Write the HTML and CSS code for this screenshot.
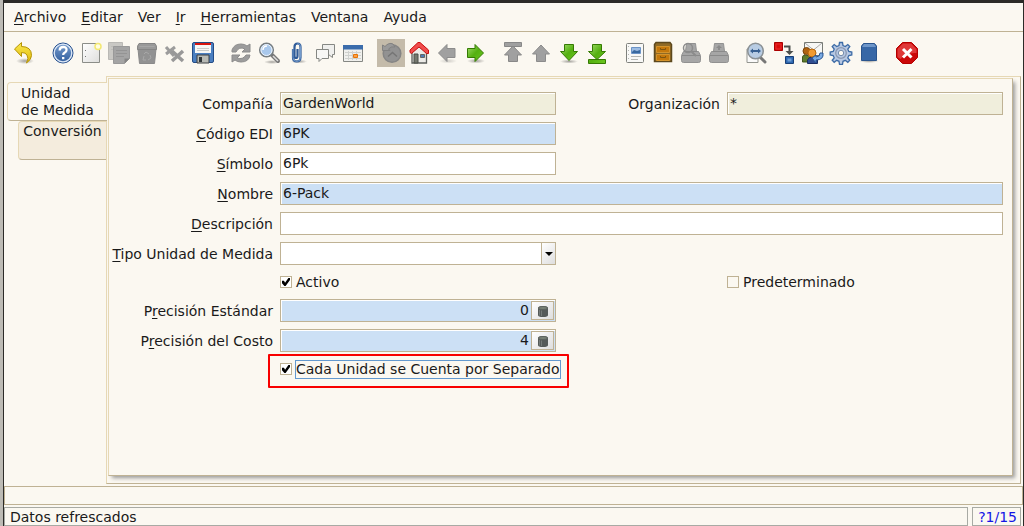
FILE: index.html
```html
<!DOCTYPE html>
<html lang="es">
<head>
<meta charset="utf-8">
<meta name="viewport" content="width=device-width, initial-scale=1">
<title>Unidad de Medida</title>
<link rel="stylesheet" href="styles.css">
</head>
<body>
<svg class="defs" width="0" height="0" aria-hidden="true">
  <defs>
    <linearGradient id="green" x1="0" y1="0" x2="1" y2="1"><stop offset="0" stop-color="#a5e070"/><stop offset=".5" stop-color="#54b010"/><stop offset="1" stop-color="#6cc820"/></linearGradient>
    <linearGradient id="blue" x1="0" y1="0" x2="0" y2="1"><stop offset="0" stop-color="#7ba0d0"/><stop offset="1" stop-color="#2f5c9c"/></linearGradient>
    <linearGradient id="gold" x1="0" y1="0" x2="0" y2="1"><stop offset="0" stop-color="#fbe94e"/><stop offset="1" stop-color="#dfb808"/></linearGradient>
    <linearGradient id="paper" x1="0" y1="0" x2="1" y2="1"><stop offset="0" stop-color="#ffffff"/><stop offset="1" stop-color="#dededc"/></linearGradient>
    <radialGradient id="shade"><stop offset="0" stop-color="#000" stop-opacity=".35"/><stop offset="1" stop-color="#000" stop-opacity="0"/></radialGradient>
    <g id="printer"><path d="M7.500 2.500h9l1 8h2l2 4v5q0 2-2 2h-15q-2 0-2-2v-5l2-4h2z" fill="#a6a6a6" stroke="#919191"/><path d="M3 14.500h18M6 10.500h12" stroke="#8a8a8a"/></g>
    <g id="calc"><path d="M1 3q0-2 5-2t5 2v7q0 2-5 2t-5-2z" fill="#555a59"/><ellipse cx="6" cy="3" rx="4.500" ry="1.500" fill="#7a8378" stroke="#5c635e"/><path d="M2.500 5v5.500M4.500 5.500V11" stroke="#747a79"/></g>
  </defs>
</svg>

<main class="window">
  <nav class="menubar" aria-label="Menú principal">
    <button><u>A</u>rchivo</button>
    <button><u>E</u>ditar</button>
    <button>Ver</button>
    <button><u>I</u>r</button>
    <button><u>H</u>erramientas</button>
    <button>Ventana</button>
    <button>Ayuda</button>
  </nav>

  <div class="toolbar" role="toolbar" aria-label="Herramientas">
    <div class="group">
      <button aria-label="Deshacer"><svg viewBox="0 0 24 24"><ellipse cx="12" cy="20" rx="9" ry="3" fill="url(#shade)"/><path d="M1.500 8 8.500 1.500V5.500q10 0 10 9 0 4-5 7.500 2.500-5 .500-8-1.500-2.500-5.500-2.500v4z" fill="url(#gold)" stroke="#b59406"/></svg></button>
    </div>
    <div class="group">
      <button aria-label="Ayuda"><svg viewBox="0 0 24 24"><circle cx="12" cy="12" r="10" fill="url(#blue)" stroke="#234d8c"/><circle cx="12" cy="12" r="8.800" fill="none" stroke="#dce7f5" stroke-width="1.300"/><path d="M8.700 9.500q0-3.500 3.500-3.500t3.300 3q0 1.700-2 2.800-1.300.7-1.300 2.200M12.200 16v2.300" fill="none" stroke="#fff" stroke-width="2.300"/></svg></button>
      <button aria-label="Nuevo"><svg viewBox="0 0 24 24"><path d="M3.500 2.500h17v19h-17z" fill="url(#paper)" stroke="#8b8d88"/><path d="M6 9.500h1M6 15.500h1" stroke="#777"/><circle cx="19" cy="5.500" r="3" fill="#fffde0" stroke="#f3e873" stroke-width="1.500"/></svg></button>
      <button aria-label="Copiar"><svg viewBox="0 0 24 24"><path d="M1.500 1.500h14v17h-14z" fill="#c9c8c4" stroke="#bab9b5"/><path d="M4 5.500h9M4 8.500h9" stroke="#bdbcb8"/><path d="M6.500 5.500h16v12l-5 5h-11z" fill="#a4a4a4" stroke="#999"/><path d="M9 9.500h11M9 12.500h11M9 15.500h8" stroke="#949494"/><path d="M17.500 22.500v-5h5z" fill="#858585"/></svg></button>
      <button aria-label="Eliminar"><svg viewBox="0 0 24 24"><path d="M3 8h18l-1.500 14.500h-15z" fill="#929292" stroke="#8a8a8a"/><path d="M4 2.500h16q2 2 1.500 6h-19q-.5-4 1.500-6z" fill="#999" stroke="#858585"/><path d="M4.500 5.500h15" stroke="#a6a6a6"/><path d="m9 13 2-2 3 2M15 14l1 3-3 2M11 19H8l1-4" fill="none" stroke="#a8a8a8"/></svg></button>
      <button aria-label="Borrar selección"><svg viewBox="0 0 24 24"><path d="m3 6 8 9M12 6l-9 7" stroke="#9c9c9c" stroke-width="3"/><path d="m9 10 11 10M20 10 9 20" stroke="#989898" stroke-width="3.500"/></svg></button>
      <button aria-label="Guardar"><svg viewBox="0 0 24 24"><rect x="1.500" y="1.500" width="21" height="20" rx="1.500" fill="#4b7fc0" stroke="#244c86"/><path d="M4 2h16v10H4z" fill="#f7f7f5"/><path d="M4 3h16" stroke="#d8150f" stroke-width="2"/><path d="M6 7.500h12M6 9.500h12" stroke="#c9cbc9"/><path d="M6 14h12v8H6z" fill="#b8bab5" stroke="#3c4145"/><path d="M8 16h3v5H8z" fill="#303638"/></svg></button>
    </div>
    <div class="group">
      <button aria-label="Refrescar"><svg viewBox="0 0 24 24"><path d="M3 11V9q2-6 9-6 4 0 6 2l3-2v8h-8l3-3q-6-3-9 3zM21 14q-1 7-9 7-4 0-6-2l-3 2v-7h8l-3 3q6 2 9-3z" fill="#9c9c9c" stroke="#8c8c8c"/></svg></button>
      <button aria-label="Encontrar"><svg viewBox="0 0 24 24"><ellipse cx="15" cy="21" rx="8" ry="2" fill="url(#shade)"/><path d="m15 14 6 6" stroke="#777" stroke-width="4" stroke-linecap="round"/><path d="m16 15 5 5" stroke="#ddd" stroke-width="1.500"/><circle cx="9.500" cy="9" r="6.800" fill="#a9c8ec" stroke="#777d80" stroke-width="1.500"/><circle cx="9.500" cy="9" r="5.500" fill="none" stroke="#eef4fb"/><path d="M6 9q0-4 4-4" stroke="#fff" fill="none" stroke-width="1.500"/></svg></button>
      <button aria-label="Anexos"><svg viewBox="0 0 24 24"><ellipse cx="14" cy="20.500" rx="8" ry="2" fill="url(#shade)"/><path d="M8 8v8.500q0 4 3.700 4t3.800-4V6q0-3.500-3-3.500t-3 3.500v9q0 2 1.500 2t1.500-2V8" fill="none" stroke="#2f5b98" stroke-width="2.200"/><path d="M8 8v8.500q0 4 3.700 4t3.800-4V6q0-3.500-3-3.500" fill="none" stroke="#84abd9" stroke-width=".8"/></svg></button>
      <button aria-label="Conversación"><svg viewBox="0 0 24 24"><path d="M9.500 3.500h12v10h-2v3l-4-3h-6z" fill="#efefed" stroke="#858783"/><path d="M3.500 8.500h12v9H9l-3 3v-3H3.500z" fill="#f7f7f5" stroke="#858783"/></svg></button>
      <button aria-label="Calendario"><svg viewBox="0 0 24 24"><path d="M2.500 5.500h19v15h-19z" fill="#f0f0ed" stroke="#858783"/><path d="M2 4h20v4.500H2z" fill="#3b6cab"/><path d="M4 11.500h16M4 14.500h16M4 17.500h16M7.500 10v9M11.500 10v9M15.500 10v9" stroke="#cfd1ce"/><path d="M12.500 13.500h4v3h-4z" fill="#f9a04a" stroke="#e87404"/></svg></button>
    </div>
    <div class="group">
      <button class="pressed" aria-label="Historial" aria-pressed="true"><svg viewBox="0 0 24 24"><circle cx="13" cy="12.500" r="8.800" fill="#929292" stroke="#858585" stroke-width="1.500"/><path d="m9 15.500 4.500-4 4.500 4" fill="none" stroke="#757575" stroke-width="1.500"/><path d="M3.500 9.500V4l2.500 1.500q4-4.500 8-2.500l2 3q-4-1-6.500 2l1.500 1.500z" fill="#999" stroke="#818181"/></svg></button>
      <button aria-label="Inicio"><svg viewBox="0 0 24 24"><path d="M5 11v11h14.500V11L12 4z" fill="#ecebe7" stroke="#5c5f5c" stroke-width="1.300"/><path d="M7 13h4v9H7z" fill="#75786f" stroke="#4b4e49"/><path d="M13.500 13.500h4v3h-4z" fill="#4e7cb4" stroke="#666"/><path d="M3 11.500V9l8-7.500h2L21.500 9v3.500h-2L12 6l-7.500 6.500z" fill="#f14c4c" stroke="#c80f0f"/></svg></button>
      <button aria-label="Atrás"><svg viewBox="0 0 24 24"><ellipse cx="13" cy="20" rx="9" ry="2.500" fill="url(#shade)" opacity=".5"/><path d="M3.500 12 12 3.500v4h8v9h-8v4z" fill="#a0a0a0" stroke="#8c8c8c"/></svg></button>
      <button aria-label="Adelante"><svg viewBox="0 0 24 24"><ellipse cx="13" cy="20" rx="9" ry="2.500" fill="url(#shade)"/><path d="M20.500 12 12 3.500v4H4.500v9H12v4z" fill="url(#green)" stroke="#357a03"/></svg></button>
    </div>
    <div class="group">
      <button aria-label="Primer registro"><svg viewBox="0 0 24 24"><path d="M3.500 1.500h17v4h-17zM12 5l8.500 9h-4v6.500h-9V14h-4z" fill="#a0a0a0" stroke="#888"/></svg></button>
      <button aria-label="Registro anterior"><svg viewBox="0 0 24 24"><path d="m12 4 8.500 9h-4v7.500h-9V13h-4z" fill="#a0a0a0" stroke="#8c8c8c"/></svg></button>
      <button aria-label="Registro siguiente"><svg viewBox="0 0 24 24"><ellipse cx="12" cy="20.500" rx="9" ry="2" fill="url(#shade)"/><path d="m12 19.500 8.500-9h-4v-7h-9v7h-4z" fill="url(#green)" stroke="#357a03"/></svg></button>
      <button aria-label="Último registro"><svg viewBox="0 0 24 24"><path d="m12 18.500 8.500-8h-4v-7h-9v7h-4zM3.500 18.500h17v4h-17z" fill="url(#green)" stroke="#357a03"/></svg></button>
    </div>
    <div class="group">
      <button aria-label="Informe"><svg viewBox="0 0 24 24"><rect x="3.500" y="2.500" width="17" height="19" rx="1" fill="#f8f8f6" stroke="#7f817c"/><path d="M8.500 6.500h9v6h-9z" fill="#9dbce2" stroke="#6b93c6"/><path d="m9 11 2-2 3 1 3-1v3H9z" fill="#39699f"/><path d="M8 15.500h10M8 18.500h7M5 5.500h1M5 9.500h1M5 13.500h1M5 17.500h1" stroke="#b4b6b2"/></svg></button>
      <button aria-label="Archivo"><svg viewBox="0 0 24 24"><path d="M3.500 3.500 5 1.500h14l1.500 2v17h-17z" fill="#8f6a26" stroke="#5c481e" stroke-width="1.500"/><path d="M5.500 5.500h13v6h-13zM5.500 13.500h13v6h-13z" fill="#c4780c" stroke="#d3932c"/><path d="M9.500 7v1.500h5V7M9.500 15v1.500h5V15" fill="none" stroke="#7e5510"/></svg></button>
      <button aria-label="Vista previa"><svg viewBox="0 0 24 24"><use href="#printer"/><circle cx="9" cy="7" r="4.500" fill="none" stroke="#8c8c8c" stroke-width="1.500"/><path d="m12 10 5 5" stroke="#8c8c8c" stroke-width="2"/></svg></button>
      <button aria-label="Imprimir"><svg viewBox="0 0 24 24"><use href="#printer"/><path d="m12 4 3 3h-2v2h-2V7H9z" fill="#8a8a8a"/></svg></button>
    </div>
    <div class="group">
      <button aria-label="Visualiza"><svg viewBox="0 0 24 24"><path d="M2 8h11v13.500H2z" fill="#fafafa" stroke="#93958f"/><path d="m15 16 5 5" stroke="#777" stroke-width="3" stroke-linecap="round"/><circle cx="10.500" cy="10" r="7.800" fill="#b8cce3" stroke="#8b9195" stroke-width="1.500"/><path d="m5 10 3-2.500v1.500h5V7.500l3 2.500-3 2.500V11H8v1.500z" fill="#386091"/></svg></button>
      <button aria-label="Flujos de trabajo"><svg viewBox="0 0 24 24"><path d="M1.500 1.500h8v8h-8z" fill="#d90b0b" stroke="#aa0000"/><path d="M3 3h5v5H3z" fill="none" stroke="#e82c2c"/><path d="M11 5.500h5.500V12" fill="none" stroke="#4c4f4c" stroke-width="2"/><path d="M12.500 10h8l-4 4z" fill="#4c4f4c"/><path d="M12.500 15.500h8v7h-8z" fill="#2e68b1" stroke="#183e75"/><path d="M14.500 17.500h4v3h-4z" fill="#709fd4"/></svg></button>
      <button aria-label="Solicitudes"><svg viewBox="0 0 24 24"><path d="M3.500 1.500h18v13h-18z" fill="#f7f7f5" stroke="#777a75"/><path d="m4 2 8.500 7L21 2" fill="none" stroke="#aaa"/><path d="M1.500 21v-5q0-2 3-2t4 2v5z" fill="#5f7c2c" stroke="#40561d"/><circle cx="5.500" cy="10" r="3.500" fill="#af6311" stroke="#7a430a"/><path d="M6.500 22.500V19q1-3 5-3t5 3v3.500z" fill="#314d91" stroke="#1b2e62"/><circle cx="11" cy="12" r="4" fill="#f19a31" stroke="#b76508"/><path d="m11 17 4-3v2q4 0 4-4h3q1 7-7 7v3z" fill="#7aaae2" stroke="#285594"/></svg></button>
      <button aria-label="Proceso"><svg viewBox="0 0 24 24"><path d="m10.500 1.500h3l.5 3 2.300 1 2.500-2 2 2-2 2.500 1 2.500 3 .5v3l-3 .5-1 2.300 2 2.500-2 2-2.500-2-2.300 1-.5 3h-3l-.5-3-2.300-1-2.500 2-2-2 2-2.500-1-2.300-3-.5v-3l3-.5 1-2.500-2-2.500 2-2 2.500 2 2.300-1z" fill="#b7c8e3" stroke="#3d6ba6" stroke-width="1.300"/><circle cx="12" cy="12" r="5.300" fill="none" stroke="#8997b1" stroke-width="1.300"/><circle cx="12" cy="12" r="2.700" fill="#fbf8f1" stroke="#758cac"/></svg></button>
      <button aria-label="Producto"><svg viewBox="0 0 24 24"><ellipse cx="12" cy="20" rx="10" ry="2" fill="url(#shade)"/><path d="M4.500 19.500V5l2-2.500h11l2 2.500v14.500z" fill="#3767a6" stroke="#2a548d"/><path d="m5 6 2-3h10l2 3z" fill="#6e96c9"/></svg></button>
    </div>
    <div class="group">
      <button aria-label="Salir"><svg viewBox="0 0 24 24"><path d="M7.500 1.500h9l6 6v9l-6 6h-9l-6-6v-9z" fill="#cb0808" stroke="#b40000"/><path d="M8 2.500h8l5.500 5.500v4q-9-1-16 6l-3-2V8z" fill="#df3939"/><path d="m8 8 8.500 8.500M16.500 8 8 16.500" stroke="#fff" stroke-width="3"/></svg></button>
    </div>
  </div>

  <div class="workspace">
    <div class="tabs" role="tablist" aria-orientation="vertical">
      <button class="tab active" role="tab" aria-selected="true"><span>Unidad<br>de Medida</span></button>
      <button class="tab nested" role="tab" aria-selected="false">Conversión</button>
    </div>
    <section class="frame" role="tabpanel">
      <form class="form">
        <label for="company">Compañía</label>
        <input class="field readonly" id="company" value="GardenWorld" readonly>
        <label for="org">Organización</label>
        <input class="field readonly" id="org" value="*" readonly>

        <label class="first" for="edi"><u>C</u>ódigo EDI</label>
        <input class="field required" id="edi" value="6PK">

        <label class="first" for="symbol"><u>S</u>ímbolo</label>
        <input class="field" id="symbol" value="6Pk">

        <label class="first" for="name"><u>N</u>ombre</label>
        <input class="field required wide" id="name" value="6-Pack">

        <label class="first" for="description"><u>D</u>escripción</label>
        <input class="field wide" id="description">

        <label class="first" for="type"><u>T</u>ipo Unidad de Medida</label>
        <div class="combo">
          <select class="field" id="type"><option></option></select>
          <span class="arrow"></span>
        </div>

        <div class="check start"><input type="checkbox" id="active" checked><label for="active">Activo</label></div>
        <div class="check end"><input type="checkbox" id="default"><label for="default">Predeterminado</label></div>

        <label class="first" for="std">P<u>r</u>ecisión Estándar</label>
        <div class="field required number">
          <input id="std" value="0">
          <button type="button" aria-label="Calculadora"><svg viewBox="0 0 12 12"><use href="#calc"/></svg></button>
        </div>

        <label class="first" for="cost">P<u>r</u>ecisión del Costo</label>
        <div class="field required number">
          <input id="cost" value="4">
          <button type="button" aria-label="Calculadora"><svg viewBox="0 0 12 12"><use href="#calc"/></svg></button>
        </div>

        <div class="check start marked"><input type="checkbox" id="each" checked><label class="focused" for="each">Cada Unidad se Cuenta por Separado</label></div>
      </form>
    </section>
  </div>

  <div class="infobar"></div>
  <footer class="status">
    <div class="message" role="status">Datos refrescados</div>
    <div class="counter">?1/15</div>
  </footer>
</main>
</body>
</html>
```
FILE: styles.css
```css
* { box-sizing: border-box; }

:root {
  --paper: #fbf8f1;
  --line: #bfb294;
  --tan: #e6d8b5;
  --required: #cce0f5;
}

body {
  margin: 0;
  background: #bdbbb5;
  color: #1a1a1a;
  font: 14px/17px "DejaVu Sans", Verdana, sans-serif;
}

button, input, select { font: inherit; color: inherit; }
button { border: 0; padding: 0; background: none; }
u { text-underline-offset: 2px; }

.defs { position: absolute; }

.window {
  display: flex;
  flex-direction: column;
  min-height: 100vh;
  margin-left: 3px;
  border: solid #2c2b28;
  border-width: 3px 1px 0;
  background: var(--paper);
}

.menubar {
  display: flex;
  gap: 15px;
  height: 29px;
  padding: 0 10px;
  border-bottom: 1px solid var(--line);
}

.toolbar {
  display: flex;
  gap: 10px;
  padding: 7px;
}

.group { display: flex; }

.group button {
  display: grid;
  place-items: center;
  width: 28px;
  height: 28px;
}

.group svg { width: 24px; height: 24px; }
.group .pressed { background: #c4bbaa; }

.workspace {
  display: flex;
  flex: 1;
  padding: 2px 2px 2px 3px;
}

.tabs {
  width: 99px;
  padding-top: 6px;
}

.tab {
  display: flex;
  justify-content: center;
  height: 39px;
  border: 1px solid var(--tan);
  border-right: 0;
  border-bottom-color: var(--line);
  border-radius: 4px 0 0 4px;
  text-align: left;
}

.tab.active {
  align-items: center;
  width: calc(100% + 1px);
  position: relative;
  background: var(--paper);
}

.tab.nested {
  width: calc(100% - 11px);
  margin-left: 11px;
  padding-top: 1px;
  background: #f4ecdd;
}

.frame {
  display: flex;
  flex: 1;
  padding: 1px 7px 7px 1px;
  border: 1px solid var(--tan);
  border-right-color: var(--line);
  border-bottom-color: var(--line);
}

.form {
  display: grid;
  grid-template-columns: 157px minmax(0, 1fr) 157px minmax(0, 1fr);
  grid-auto-rows: min-content;
  align-items: center;
  gap: 7px;
  flex: 1;
  padding: 13px 9px 13px 7px;
  border: 1px solid var(--tan);
  border-right-color: var(--line);
  border-bottom-color: var(--line);
  box-shadow: 3px 3px 4px -1px #999;
}

.form > label {
  justify-self: end;
  padding-top: 1px;
  white-space: nowrap;
}

.form > .first { grid-column-start: 1; }

.field {
  width: 100%;
  min-width: 0;
  height: 23px;
  padding: 0 2px 2px;
  border: 1px solid var(--line);
  border-radius: 0;
  outline: 0;
  background: #fff;
  box-shadow: inset 1px 1px #fff;
}

.readonly { background: #f0eedc; }
.required { background: var(--required); }
.wide { grid-column: 2 / -1; }

.combo { position: relative; }
.combo select { display: block; appearance: none; }

.arrow {
  position: absolute;
  inset: 1px 1px 1px auto;
  display: grid;
  place-items: center;
  width: 14px;
  border-left: 1px solid var(--line);
  background: linear-gradient(135deg, #fff, #dedede);
  pointer-events: none;
}

.arrow::before {
  content: "";
  border: 4px solid transparent;
  border-top-color: #000;
  border-bottom: 0;
}

.check {
  display: flex;
  align-items: center;
  gap: 4px;
  height: 20px;
}

.check.start { grid-column-start: 2; }
.check.end { grid-column-start: 4; }

.check input {
  appearance: none;
  display: grid;
  place-items: center;
  flex: none;
  width: 12px;
  height: 12px;
  margin: 0;
  border: 1px solid var(--line);
}

.check input:checked { background: #fff; }

.check input:checked::before {
  content: "";
  width: 8px;
  height: 8px;
  background: #000;
  clip-path: polygon(0 35%, 25% 35%, 38% 60%, 80% 0, 100% 0, 100% 25%, 45% 100%, 30% 100%, 0 65%);
}

.check label { white-space: nowrap; }
.check .focused { outline: 1px solid #6399cf; }

.marked { position: relative; }

.marked::after {
  content: "";
  position: absolute;
  inset: -5px -13px -9px -12px;
  border: 2px solid #f80000;
  border-radius: 1px;
  pointer-events: none;
}

.number {
  display: flex;
  padding: 1px;
}

.number input {
  flex: 1;
  min-width: 0;
  padding: 0 2px 0 0;
  border: 0;
  background: none;
  text-align: right;
}

.number button {
  display: grid;
  place-items: center;
  width: 23px;
  border: 1px solid var(--line);
  background: linear-gradient(135deg, #fff, #dedede);
}

.number svg { width: 12px; height: 12px; }

.infobar {
  height: 19px;
  border: 1px solid var(--line);
}

.status {
  display: flex;
  gap: 4px;
  padding: 2px 2px 0 0;
}

.message, .counter {
  height: 19px;
  border: 1px solid #a8aaa4;
  line-height: 18px;
  white-space: nowrap;
}

.message { flex: 1; padding-left: 5px; }

.counter {
  padding: 0 3px 0 5px;
  color: #1414e6;
}
```
